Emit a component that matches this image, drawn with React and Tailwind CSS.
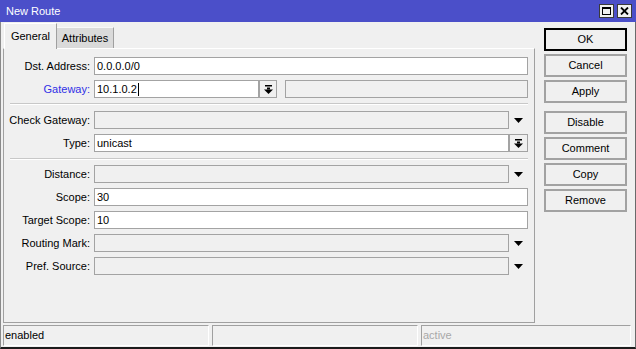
import React from "react";

const font = { fontFamily: '"Liberation Sans", Arial, sans-serif' };

function DropIcon() {
  return (
    <svg width="9" height="9" viewBox="0 0 9 9">
      <rect x="1" y="0" width="7" height="1.5" fill="#000" />
      <rect x="3" y="2.5" width="3" height="2" fill="#000" />
      <polygon points="0,4.5 9,4.5 4.5,9" fill="#000" />
    </svg>
  );
}

function Tri() {
  return (
    <svg width="9" height="5" viewBox="0 0 9 5">
      <polygon points="0,0 9,0 4.5,5" fill="#000" />
    </svg>
  );
}

function Label({ children, blue }) {
  return (
    <div
      className={`w-[86px] mr-[4px] text-right text-[11px] leading-none ${
        blue ? "text-[#2f2fe6]" : "text-black"
      }`}
    >
      {children}
    </div>
  );
}

function Input({ value, disabled, w, cursor }) {
  return (
    <div
      className={`h-[18px] border border-[#a3a3a3] flex items-center pl-[2px] text-[11px] leading-none text-black ${
        disabled ? "bg-[#f0f0f0]" : "bg-white"
      }`}
      style={{ width: w }}
    >
      {value}
      {cursor && <span className="inline-block w-[1px] h-[13px] bg-black ml-[1px]" />}
    </div>
  );
}

function Row({ label, blue, children }) {
  return (
    <div className="flex items-center h-[18px]">
      <Label blue={blue}>{label}</Label>
      {children}
    </div>
  );
}

function ArrowSlot() {
  return (
    <div className="w-[19px] h-[18px] flex items-center justify-center">
      <Tri />
    </div>
  );
}

function DropBtn({ w }) {
  return (
    <div
      className="h-[18px] border border-[#a3a3a3] bg-[#f0f0f0] flex items-center justify-center"
      style={{ width: w }}
    >
      <DropIcon />
    </div>
  );
}

function Sep({ className }) {
  return (
    <div className={`ml-[6px] w-[518px] h-[2px] border-t border-[#c8c8c8] border-b border-b-white ${className}`} />
  );
}

function Btn({ children, def, className = "" }) {
  return (
    <div
      className={`w-[83px] h-[23px] flex items-center justify-center text-[11px] leading-none text-black bg-[#f0f0f0] border-2 ${
        def ? "border-black" : "border-[#a2a2a2]"
      } ${className}`}
    >
      {children}
    </div>
  );
}

export default function App() {
  return (
    <div className="w-[636px] h-[349px] bg-[#f0f0f0] flex flex-col overflow-hidden" style={font}>
      {/* Title bar */}
      <div className="h-[22px] bg-[#4b4fc9] flex items-center pl-[6px] pr-[4px] shrink-0">
        <div className="text-white text-[11px] leading-none flex-1">New Route</div>
        <div className="flex gap-[3px]">
          <div className="w-[15px] h-[14px] bg-[#f0f0f0] border border-[#3a3a3a] flex items-center justify-center">
            <div className="w-[9px] h-[8px] border border-black border-t-2" />
          </div>
          <div className="w-[15px] h-[14px] bg-[#f0f0f0] border border-[#3a3a3a] flex items-center justify-center">
            <svg width="9" height="8" viewBox="0 0 9 8">
              <path d="M1 0.5 L8 7.5 M8 0.5 L1 7.5" stroke="#000" strokeWidth="1.8" />
            </svg>
          </div>
        </div>
      </div>

      {/* Body */}
      <div className="h-[327px] border-l border-r border-l-[#8a8a8a] border-r-[#6a6a6a] border-b-2 border-b-[#1c1c1c] flex flex-col">
        <div className="flex h-[301px]">
          {/* Left: tabs + panel */}
          <div className="ml-[2px] w-[532px] flex flex-col">
            <div className="h-[26px] flex items-end pl-[1px] relative z-10">
              <div className="h-[26px] w-[53px] bg-[#f0f0f0] border-t border-l border-t-white border-l-white border-r border-r-[#a0a0a0] flex items-start justify-center pt-[7px] text-[11px] leading-none text-black -mb-[1px]">
                General
              </div>
              <div className="h-[21px] w-[57px] bg-[#dadada] border-t border-r border-t-[#f8f8f8] border-r-[#a0a0a0] flex items-start justify-center pt-[5px] text-[11px] leading-none text-black">
                Attributes
              </div>
            </div>
            <div className="h-[275px] border border-t-white border-l-[#a0a0a0] border-r-[#a0a0a0] border-b-[#a0a0a0] pt-[8px] flex flex-col">
              <div className="flex flex-col gap-[5px]">
                <Row label="Dst. Address:">
                  <Input value="0.0.0.0/0" w={434} />
                </Row>
                <Row label="Gateway:" blue>
                  <Input value="10.1.0.2" w={165} cursor />
                  <DropBtn w={18} />
                  <div className="w-[8px]" />
                  <Input value="" disabled w={243} />
                </Row>
              </div>
              <Sep className="mt-[5px] mb-[6px]" />
              <div className="flex flex-col gap-[5px]">
                <Row label="Check Gateway:">
                  <Input value="" disabled w={415} />
                  <ArrowSlot />
                </Row>
                <Row label="Type:">
                  <Input value="unicast" w={415} />
                  <DropBtn w={19} />
                </Row>
              </div>
              <Sep className="mt-[6px] mb-[5px]" />
              <div className="flex flex-col gap-[5px]">
                <Row label="Distance:">
                  <Input value="" disabled w={415} />
                  <ArrowSlot />
                </Row>
                <Row label="Scope:">
                  <Input value="30" w={434} />
                </Row>
                <Row label="Target Scope:">
                  <Input value="10" w={434} />
                </Row>
                <Row label="Routing Mark:">
                  <Input value="" disabled w={415} />
                  <ArrowSlot />
                </Row>
                <Row label="Pref. Source:">
                  <Input value="" disabled w={415} />
                  <ArrowSlot />
                </Row>
              </div>
            </div>
          </div>

          {/* Right buttons */}
          <div className="ml-[9px] mt-[6px] flex flex-col gap-[3px]">
            <Btn def>OK</Btn>
            <Btn>Cancel</Btn>
            <Btn>Apply</Btn>
            <Btn className="mt-[5px]">Disable</Btn>
            <Btn>Comment</Btn>
            <Btn>Copy</Btn>
            <Btn>Remove</Btn>
          </div>
        </div>

        {/* Status bar */}
        <div className="mt-[2px] ml-[2px] flex gap-[3px] h-[21px]">
          <div className="w-[206px] h-full border border-t-[#a0a0a0] border-l-[#a0a0a0] border-r-white border-b-white flex items-center pl-[1px] text-[11px] leading-none text-black">
            enabled
          </div>
          <div className="w-[206px] h-full border border-t-[#a0a0a0] border-l-[#a0a0a0] border-r-white border-b-white" />
          <div className="w-[210px] h-full border border-t-[#a0a0a0] border-l-[#a0a0a0] border-r-white border-b-white flex items-center pl-[1px] text-[11px] leading-none text-[#a8a8a8]">
            active
          </div>
        </div>
      </div>
    </div>
  );
}
